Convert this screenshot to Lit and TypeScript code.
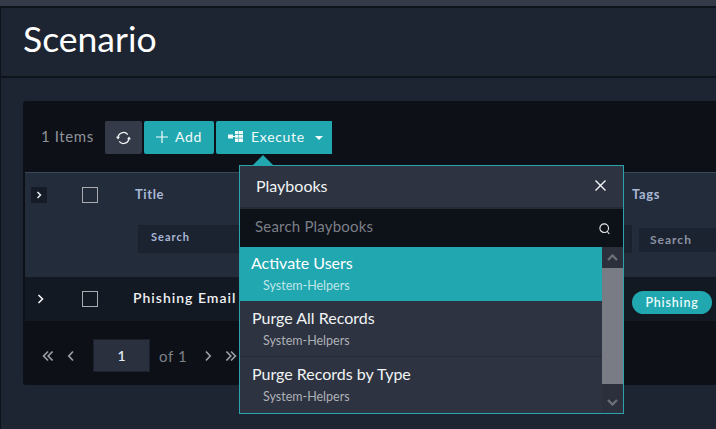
import { LitElement, html, css, svg } from "lit";
import { customElement } from "lit/decorators.js";

const chevron = (dir: "left" | "right", color = "#9a9ea6") => svg`
  <svg class="pg-icon" width="8" height="12" viewBox="0 0 8 12" fill="none" stroke=${color} stroke-width="1.7">
    <path d=${dir === "left" ? "M6 1.5 1.8 6 6 10.5" : "M2 1.5 6.2 6 2 10.5"} />
  </svg>`;

const doubleChevron = (dir: "left" | "right") => svg`
  <svg class="pg-icon" width="12" height="12" viewBox="0 0 12 12" fill="none" stroke="#9a9ea6" stroke-width="1.7">
    <path d=${dir === "left" ? "M6 1.5 1.6 6 6 10.5M10.6 1.5 6.2 6l4.4 4.5" : "M1.4 1.5 5.8 6l-4.4 4.5M6 1.5 10.4 6 6 10.5"} />
  </svg>`;

@customElement("app-root")
export class AppRoot extends LitElement {
  static styles = css`
    :host {
      display: block;
      position: relative;
      width: 716px;
      height: 429px;
      overflow: hidden;
      background: #1e2532;
      font-family: Lato, "Liberation Sans", sans-serif;
      color: #fff;
    }

    * {
      box-sizing: border-box;
    }

    .topbar {
      height: 8px;
      background: #343a48;
      border-bottom: 2px solid #0f141c;
    }

    .page {
      height: 421px;
      border-left: 1px solid #0f141c;
    }

    .page-head {
      height: 70px;
      padding: 9px 0 0 22px;
      border-bottom: 2px solid #0f141c;
    }

    .page-head h1 {
      margin: 0;
      font-size: 35.5px;
      line-height: 44px;
      font-weight: 400;
    }

    .card {
      margin: 23px 0 0 22px;
      height: 284px;
      padding-left: 2px;
      background: #0d1117;
      border-radius: 3px 0 0 3px;
    }

    .toolbar {
      display: flex;
      height: 71px;
      padding: 20px 0 0 16px;
    }

    .count {
      width: 64px;
      height: 33px;
      line-height: 30px;
      font-size: 15px;
      letter-spacing: 0.6px;
      color: #8f939b;
    }

    .btn {
      display: flex;
      align-items: center;
      height: 33px;
      margin-right: 2px;
      padding: 0 0 2px 12px;
      border-radius: 2px;
      background: #21a7b0;
      font-size: 14px;
      letter-spacing: 0.7px;
      color: #f2fbfb;
    }

    .btn.refresh {
      width: 37px;
      padding: 0 0 0 11px;
      background: #343a47;
    }

    .btn.add {
      width: 70px;
      gap: 7px;
    }

    .btn.execute {
      width: 116px;
      margin-right: 0;
      gap: 8px;
      border-radius: 2px 0 0 2px;
    }

    .caret {
      width: 0;
      height: 0;
      margin: 2px 0 0 2px;
      border-left: 4px solid transparent;
      border-right: 4px solid transparent;
      border-top: 4px solid #f2fbfb;
    }

    .thead,
    .row {
      display: grid;
      grid-template-columns: 57px 53px 497px 1fr;
    }

    .thead {
      height: 105px;
      background: #222c3a;
      border-top: 1px solid #37475c;
      font-size: 13px;
      font-weight: 700;
      letter-spacing: 0.6px;
      color: #a9b8d6;
    }

    .cell {
      min-width: 0;
    }

    .thead .cell {
      padding-top: 14px;
    }

    .expander {
      display: flex;
      align-items: center;
      justify-content: center;
      width: 16px;
      height: 16px;
      margin-left: 6px;
      background: #151c27;
    }

    .box {
      display: block;
      width: 16px;
      height: 16px;
      border: 1px solid #a9abaf;
    }

    .head-label {
      display: block;
      height: 16px;
      line-height: 15px;
    }

    .filter {
      height: 28px;
      margin-top: 22px;
      margin-left: 3px;
      padding-left: 12px;
      line-height: 22px;
      background: #1c2330;
      border: 1px solid #1a212d;
      font-size: 11px;
      letter-spacing: 1px;
      color: #a9b8d6;
    }

    .tags-col .filter {
      height: 24px;
      margin-top: 25px;
      margin-left: 7px;
      padding-left: 11px;
      line-height: 23px;
      border: 0;
      color: #8b93a3;
      font-size: 12px;
    }

    .row {
      height: 44px;
      background: #131922;
      align-items: center;
    }

    .row-arrow {
      display: block;
      margin-left: 12px;
    }

    .row-title {
      margin: -3px 0 0 -2px;
      font-size: 14px;
      font-weight: 600;
      letter-spacing: 1px;
      color: #eef0f3;
      white-space: nowrap;
    }

    .pill {
      display: block;
      width: 80px;
      height: 23px;
      margin-top: 6px;
      line-height: 23px;
      text-align: center;
      border-radius: 12px;
      background: #21a7b0;
      font-size: 12.500px;
      font-weight: 600;
      letter-spacing: 0.8px;
      color: #eafafa;
    }

    .pager {
      display: flex;
      align-items: center;
      height: 33px;
      margin-top: 18px;
      padding-left: 17px;
      color: #7d8087;
    }

    .pg-icon {
      display: block;
      flex: none;
    }

    .pg-first {
      margin-right: 13px;
    }

    .pg-prev {
      margin-right: 18px;
    }

    .pg-input {
      width: 57px;
      height: 33px;
      line-height: 32px;
      text-align: center;
      background: #2a303d;
      border: 1px solid #1b212c;
      font-size: 14px;
      font-weight: 600;
      color: #dfe7f2;
    }

    .pg-of {
      width: 54px;
      padding-left: 9px;
      font-size: 15px;
      letter-spacing: 0.6px;
      white-space: nowrap;
    }

    .pg-next {
      margin-right: 13px;
    }

    .popover {
      position: absolute;
      left: 239px;
      top: 165px;
      width: 385px;
      height: 249px;
      display: flex;
      flex-direction: column;
      border: 1px solid #2aa3ac;
      background: #2d3340;
    }

    .popover::before {
      content: "";
      position: absolute;
      left: 13px;
      top: -11px;
      border-left: 10px solid transparent;
      border-right: 10px solid transparent;
      border-bottom: 10px solid #21a7b0;
    }

    .pop-head {
      display: flex;
      align-items: center;
      justify-content: space-between;
      flex: none;
      height: 43px;
      padding: 0 17px 2px 16px;
      border-bottom: 2px solid #252a35;
      font-size: 16px;
      color: #f1f3f5;
    }

    .pop-search {
      display: flex;
      align-items: center;
      justify-content: space-between;
      flex: none;
      height: 38px;
      padding: 0 13px 0 15px;
      background: #0d1118;
      font-size: 15px;
      letter-spacing: 0.2px;
      color: #7b7f87;
    }

    .pop-search span {
      margin-top: -4px;
    }

    .pop-search svg {
      margin-top: 1px;
    }

    .pop-body {
      display: flex;
      flex: 1;
      min-height: 0;
    }

    .list {
      flex: 1;
      min-width: 0;
    }

    .item {
      height: 56px;
      padding: 6px 0 0 12px;
      border-bottom: 1px solid #262b35;
      font-size: 16px;
      line-height: 22px;
      color: #f1f3f5;
    }

    .item.active {
      height: 54px;
      padding-top: 5px;
      padding-left: 11px;
      background: #21a7b0;
      border-bottom: 0;
      color: #fff;
    }

    .item:last-child {
      border-bottom: 0;
    }

    .item small {
      display: block;
      margin-top: 4px;
      padding-left: 11px;
      font-size: 12.500px;
      line-height: 16px;
      color: #aeb1b7;
    }

    .item.active small {
      padding-left: 12px;
      color: #bfe6e9;
    }

    .scrollbar {
      display: flex;
      flex-direction: column;
      flex: none;
      width: 21px;
      background: #2b303c;
    }

    .sb-btn {
      display: flex;
      align-items: center;
      justify-content: center;
      flex: none;
      height: 21px;
    }

    .sb-thumb {
      height: 116px;
      flex: none;
      background: #7a7c85;
    }

    .sb-gap {
      flex: 1;
    }
  `;

  render() {
    return html`
      <div class="topbar"></div>
      <div class="page">
        <div class="page-head"><h1>Scenario</h1></div>
        <div class="card">
          <div class="toolbar">
            <span class="count">1 Items</span>
            <span class="btn refresh">
              <svg width="15" height="14" viewBox="0 0 15 14" fill="none" stroke="#f2f4f6" stroke-width="1.300">
                <path d="M2 7a5.500 5.500 0 0 1 9.800-3.400M13 7a5.500 5.500 0 0 1-9.800 3.400" />
                <path d="M0 5.800h4L2 8.500zM11 8.200h4L13 5.500z" fill="#f2f4f6" stroke="none" />
              </svg>
            </span>
            <span class="btn add">
              <svg width="12" height="12" viewBox="0 0 12 12" stroke="#f2fbfb" stroke-width="1.200">
                <path d="M6 0v12M0 6h12" />
              </svg>
              Add
            </span>
            <span class="btn execute">
              <svg width="15" height="11" viewBox="0 0 15 13" preserveAspectRatio="none" fill="#f2fbfb">
                <path d="M0 4h5v5H0zM5 6h2v1H5z" />
                <path d="M7 0h8v3.500H7zM7 4.500h8V8H7zM7 9h8v4H7z" />
                <path d="M10 0h1v13h-1z" fill="#21a7b0" opacity=".5" />
              </svg>
              Execute
              <span class="caret"></span>
            </span>
          </div>

          <div class="thead">
            <div class="cell">
              <span class="expander">
                <svg width="6" height="8" viewBox="0 0 6 8" fill="none" stroke="#e8ebef" stroke-width="1.500">
                  <path d="M1.500 1 4.500 4l-3 3" />
                </svg>
              </span>
            </div>
            <div class="cell"><span class="box"></span></div>
            <div class="cell">
              <span class="head-label">Title</span>
              <div class="filter">Search</div>
            </div>
            <div class="cell tags-col">
              <span class="head-label">Tags</span>
              <div class="filter">Search</div>
            </div>
          </div>

          <div class="row">
            <div class="cell">
              <svg class="row-arrow" width="7" height="10" viewBox="0 0 7 10" fill="none" stroke="#f2f4f6" stroke-width="1.600">
                <path d="M1.500 1 5.500 5l-4 4" />
              </svg>
            </div>
            <div class="cell"><span class="box"></span></div>
            <div class="cell row-title">Phishing Email</div>
            <div class="cell"><span class="pill">Phishing</span></div>
          </div>

          <div class="pager">
            <span class="pg-first">${doubleChevron("left")}</span>
            <span class="pg-prev">${chevron("left")}</span>
            <span class="pg-input">1</span>
            <span class="pg-of">of 1</span>
            <span class="pg-next">${chevron("right")}</span>
            <span>${doubleChevron("right")}</span>
          </div>
        </div>
      </div>

      <div class="popover">
        <div class="pop-head">
          <span>Playbooks</span>
          <svg width="11" height="11" viewBox="0 0 11 11" stroke="#f4f5f7" stroke-width="1.400">
            <path d="M.5.500l10 10M10.500.500l-10 10" />
          </svg>
        </div>
        <div class="pop-search">
          <span>Search Playbooks</span>
          <svg width="11" height="12" viewBox="0 0 11 12" fill="none" stroke="#eef0f3" stroke-width="1.100">
            <circle cx="5.200" cy="5.200" r="4.300" />
            <path d="m8.300 8.500 2 2.500" />
          </svg>
        </div>
        <div class="pop-body">
          <div class="list">
            <div class="item active">Activate Users<small>System-Helpers</small></div>
            <div class="item">Purge All Records<small>System-Helpers</small></div>
            <div class="item">Purge Records by Type<small>System-Helpers</small></div>
          </div>
          <div class="scrollbar">
            <span class="sb-btn">
              <svg width="11" height="7" viewBox="0 0 11 7" fill="none" stroke="#6b6e76" stroke-width="2.400"><path d="M1 6l4.500-4.500L10 6" /></svg>
            </span>
            <span class="sb-thumb"></span>
            <span class="sb-gap"></span>
            <span class="sb-btn">
              <svg width="11" height="7" viewBox="0 0 11 7" fill="none" stroke="#6b6e76" stroke-width="2.400"><path d="M1 1l4.500 4.500L10 1" /></svg>
            </span>
          </div>
        </div>
      </div>
    `;
  }
}
